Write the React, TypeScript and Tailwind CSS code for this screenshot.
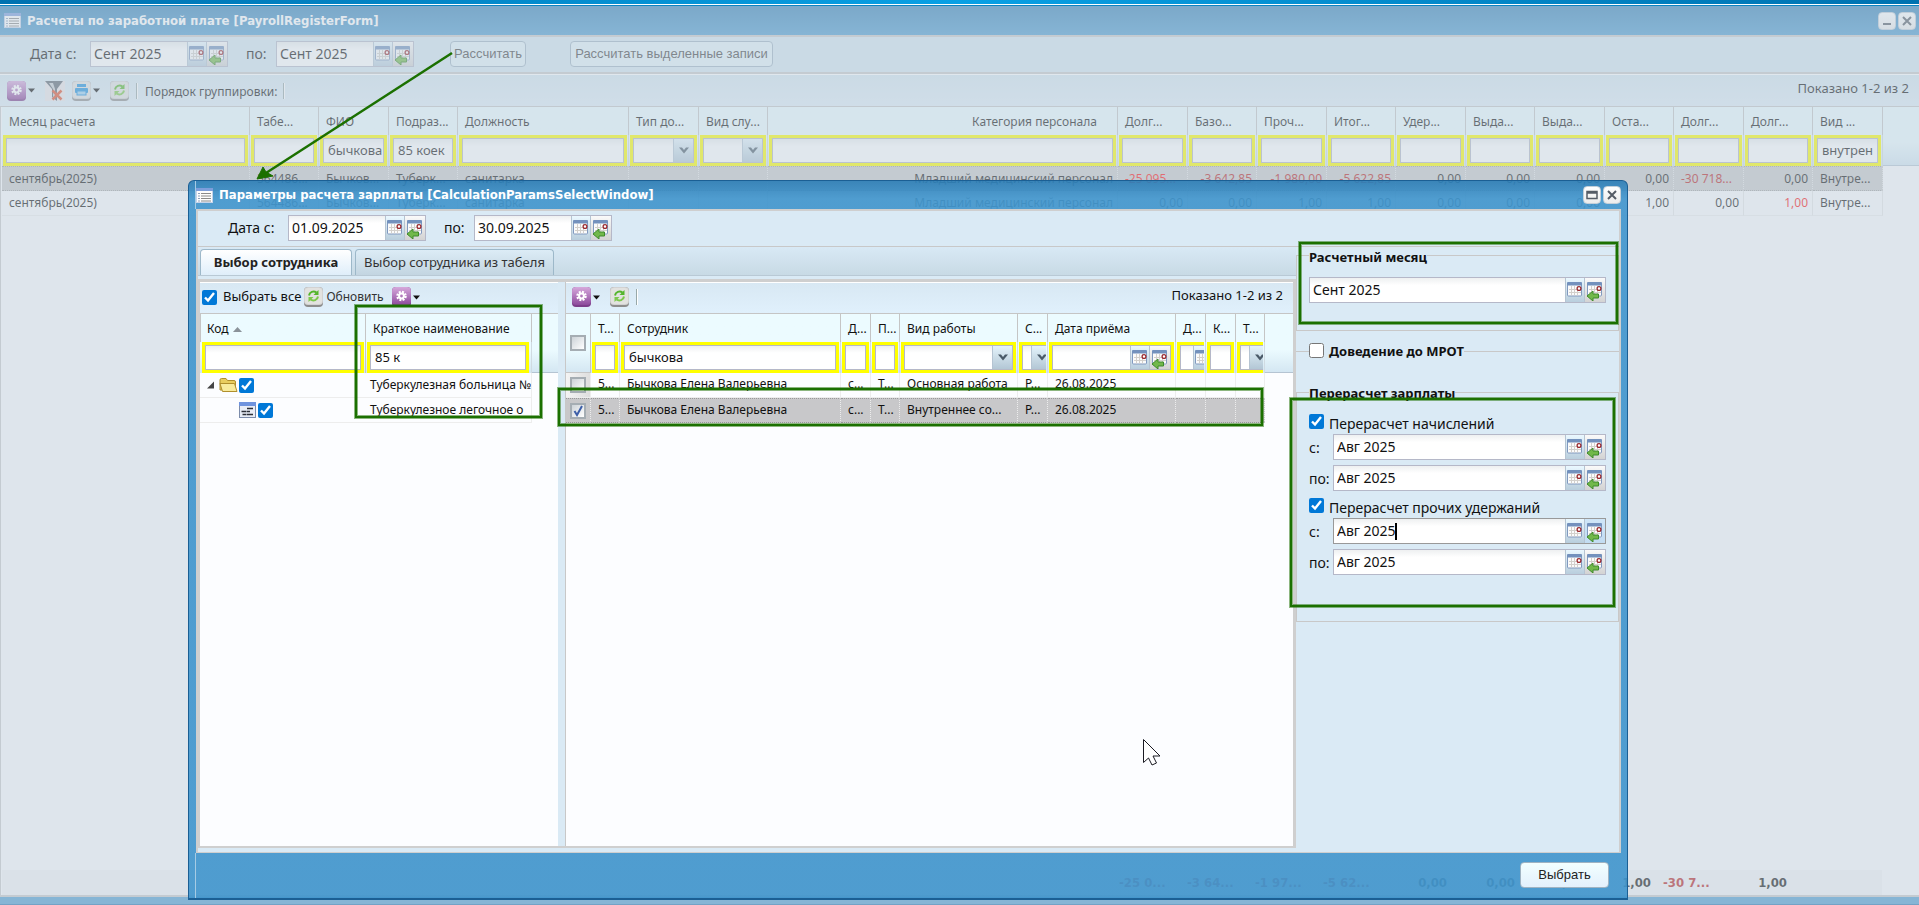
import { useState } from "react";
import type { ReactNode } from "react";
import clsx from "clsx";

type Align = "left" | "right";
type FilterKind = "text" | "select" | "date";

interface Column {
  title: string;
  width?: string;
  align?: Align;
  filter?: FilterKind;
  value?: string;
}

const W69 = "w-[69px]";
const W70 = "w-[70px]";

const registerColumns: Column[] = [
  { title: "Месяц расчета", width: "w-[248px]" },
  { title: "Табе...", width: W69 },
  { title: "ФИО", width: W70, value: "бычкова" },
  { title: "Подраз...", width: W69, value: "85 коек" },
  { title: "Должность", width: "w-[171px]" },
  { title: "Тип до...", width: W70, filter: "select" },
  { title: "Вид слу...", width: W69, filter: "select" },
  { title: "Категория персонала", align: "right" },
  { title: "Долг...", width: W70 },
  { title: "Базо...", width: W69 },
  { title: "Проч...", width: W70 },
  { title: "Итог...", width: W69 },
  { title: "Удер...", width: W70 },
  { title: "Выда...", width: W69 },
  { title: "Выда...", width: W70 },
  { title: "Оста...", width: W69 },
  { title: "Долг...", width: W70 },
  { title: "Долг...", width: W69 },
  { title: "Вид ...", width: W70, value: "внутрен" },
];

const registerRows: string[][] = [
  [
    "сентябрь(2025)", "564486...", "Бычков...", "Туберк...", "санитарка", "", "",
    "Младший медицинский персонал", "-25 095...", "-3 642,85", "-1 980,00", "-5 622,85",
    "0,00", "0,00", "0,00", "0,00", "-30 718...", "0,00", "Внутре...",
  ],
  [
    "сентябрь(2025)", "564486...", "Бычков...", "Туберк...", "санитарка", "", "",
    "Младший медицинский персонал", "0,00", "0,00", "1,00", "1,00",
    "0,00", "0,00", "0,00", "1,00", "0,00", "1,00", "Внутре...",
  ],
];

const summary = [
  "-25 0...", "-3 64...", "-1 97...", "-5 62...", "0,00", "0,00", "0,00", "1,00", "-30 7...", "1,00",
];

const employeeColumns: Column[] = [
  { title: "Т...", width: "w-[29px]" },
  { title: "Сотрудник", width: "w-[221px]", value: "бычкова" },
  { title: "Д...", width: "w-[30px]" },
  { title: "П...", width: "w-[29px]" },
  { title: "Вид работы", width: "w-[118px]", filter: "select" },
  { title: "С...", width: "w-[30px]", filter: "select" },
  { title: "Дата приёма", width: "w-[128px]", filter: "date" },
  { title: "Д...", width: "w-[30px]", filter: "date" },
  { title: "К...", width: "w-[30px]" },
  { title: "Т...", width: "w-[29px]", filter: "select" },
];

const employeeRows: string[][] = [
  ["5...", "Бычкова Елена Валерьевна", "с...", "Т...", "Основная работа", "Р...", "26.08.2025", "", "", ""],
  ["5...", "Бычкова Елена Валерьевна", "с...", "Т...", "Внутреннее со...", "Р...", "26.08.2025", "", "", ""],
];

/* ---------- icons ---------- */

function CalendarIcon({ arrow }: { arrow?: boolean }) {
  return (
    <svg width="18" height="22" viewBox="0 0 18 22" aria-hidden="true">
      <rect x="1.5" y="4" width="14" height="13" rx="1" fill="#fbfbfb" stroke="#8199bf" />
      <rect x="1" y="3" width="15" height="3.500" rx="1" fill="#7391bd" />
      <path d="M5.500 7v9.500M8.500 7v9.500M11.500 7v9.500M3 10.500h12M3 13.500h12" stroke="#d3d0cc" strokeWidth="1" />
      <circle cx="13" cy="9.500" r="1.900" fill="#fff" stroke="#9c2a30" strokeWidth="1.300" />
      {arrow && (
        <path d="M1 17l6-5v3h5.500v4H7v3z" fill="#72b84a" stroke="#3f8a2a" strokeWidth="1" strokeLinejoin="round" />
      )}
    </svg>
  );
}

function WindowIcon() {
  return (
    <svg width="17" height="15" viewBox="0 0 17 15" aria-hidden="true">
      <rect x="0.5" y="0.5" width="16" height="14" fill="#fdfdfd" stroke="#c5d3ea" />
      <rect x="0" y="0" width="17" height="3" fill="#7d9edb" />
      <path d="M2 5.500h2M2 8h2M2 10.500h2M2 13h2" stroke="#8fa2bd" />
      <path d="M5 5.500h10M5 8h10M5 10.500h10M5 13h10" stroke="#8a8a8a" />
    </svg>
  );
}

function GearIcon() {
  return (
    <svg width="19" height="20" viewBox="0 0 19 20" aria-hidden="true">
      <defs>
        <linearGradient id="gearFill" x1="0" y1="0" x2="0" y2="1">
          <stop offset="0" stopColor="#d6a9dc" />
          <stop offset="1" stopColor="#8d4a9c" />
        </linearGradient>
      </defs>
      <rect width="19" height="20" rx="4" fill="#7c3d8a" />
      <rect width="19" height="18" rx="4" fill="url(#gearFill)" />
      <circle cx="9.500" cy="9" r="4" fill="none" stroke="#fff" strokeWidth="2.500" strokeDasharray="1.900 1.240" />
      <circle cx="9.500" cy="9" r="2.400" fill="none" stroke="#fff" strokeWidth="2" />
    </svg>
  );
}

function RefreshIcon() {
  return (
    <svg width="19" height="20" viewBox="0 0 19 20" aria-hidden="true">
      <rect width="19" height="20" rx="4" fill="#8d8d8d" />
      <rect width="19" height="18" rx="4" fill="#d2d2d2" />
      <rect x="1" y="1" width="17" height="16" rx="3" fill="#e2e2e0" />
      <path d="M5 8.500C5.500 5 9.500 3.500 12.500 5.500" fill="none" stroke="#55b52c" strokeWidth="2" />
      <path d="M14.500 3v5h-5z" fill="#55b52c" />
      <path d="M14 9.500c-.5 3.500-4.500 5-7.500 3" fill="none" stroke="#7cc84c" strokeWidth="2" />
      <path d="M4.500 15v-5h5z" fill="#7cc84c" />
    </svg>
  );
}

function PrinterIcon() {
  return (
    <svg width="19" height="20" viewBox="0 0 19 20" aria-hidden="true">
      <rect width="19" height="20" rx="4" fill="#8d8d8d" />
      <rect width="19" height="18" rx="4" fill="#d2d2d2" />
      <rect x="1" y="1" width="17" height="16" rx="3" fill="#e2e2e0" />
      <rect x="5" y="3" width="9" height="3" fill="#1f8fdc" />
      <rect x="3" y="7" width="13" height="5" rx="1" fill="#1f8fdc" />
      <rect x="5" y="10" width="9" height="4" fill="#9bd0f2" stroke="#1f8fdc" />
    </svg>
  );
}

function ClearFilterIcon() {
  return (
    <svg width="20" height="20" viewBox="0 0 20 20" aria-hidden="true">
      <rect width="20" height="20" fill="#e9e5e8" />
      <path d="M0 0h18l-6 8v12l-5-4V8z" fill="#5d6670" />
      <path d="M4 2l4 6v8l2 2V8L8 2z" fill="#c9ced3" />
      <path d="M7.500 9.500l9 9M16.500 9.500l-9 9" stroke="#e0532f" strokeWidth="2.500" />
    </svg>
  );
}

function FolderIcon() {
  return (
    <svg width="19" height="16" viewBox="0 0 19 16" aria-hidden="true">
      <path d="M1 13V3q0-1.500 1.500-1.500H7L8.500 3.500H15q1.500 0 1.500 1.500v8z" fill="#e9cd5e" stroke="#b08f2c" />
      <path d="M3.500 14.500L1 6.500h14.500l2.500 8z" fill="#f8eb9c" stroke="#b08f2c" strokeLinejoin="round" />
    </svg>
  );
}

function LeafIcon() {
  return (
    <svg width="17" height="16" viewBox="0 0 17 16" aria-hidden="true">
      <rect x="0.5" y="0.5" width="16" height="15" fill="#e9edf6" stroke="#7c8cab" />
      <rect width="17" height="4" fill="#6f93de" />
      <path d="M2.500 9.500h5M8 6.500h6M8 9.500h3M3.500 12.500h4M8 12.500h6" stroke="#2c2f36" strokeWidth="1.500" />
    </svg>
  );
}

function Caret() {
  return (
    <svg width="7" height="5" viewBox="0 0 7 5" aria-hidden="true">
      <path d="M0 0.500h7L3.500 4.500z" fill="#111" />
    </svg>
  );
}

function Chevron() {
  return (
    <svg width="10" height="7" viewBox="0 0 10 7" aria-hidden="true">
      <path d="M0 0.500h3L5 3l2-2.500h3L5 6.500z" fill="#4a5a68" />
    </svg>
  );
}

/* ---------- controls ---------- */

function IconButton({ label, children }: { label: string; children: ReactNode }) {
  return (
    <button type="button" aria-label={label} className="flex shrink-0 items-center gap-[2px]">
      {children}
    </button>
  );
}

function DateTriggers({ active }: { active?: boolean }) {
  return (
    <>
      <button
        type="button"
        aria-label="Открыть календарь"
        className="flex w-5 shrink-0 items-center justify-center border-x border-[#b5c4d2] bg-linear-to-b from-[#eaf8ff] to-[#b9cedd]"
      >
        <CalendarIcon />
      </button>
      <button
        type="button"
        aria-label="Сбросить дату"
        className={clsx(
          "flex w-5 shrink-0 items-center justify-center bg-linear-to-b",
          active ? "from-[#cfe6f8] to-[#c2dcf2]" : "from-[#fafafa] to-[#d3d3d3]",
        )}
      >
        <CalendarIcon arrow />
      </button>
    </>
  );
}

interface DateFieldProps {
  label: string;
  value: string;
  width?: string;
  active?: boolean;
  hideLabel?: boolean;
}

function DateField({ label, value, width = "w-[138px]", active, hideLabel }: DateFieldProps) {
  const [text, setText] = useState(value);

  return (
    <div
      className={clsx(
        "relative flex h-[26px] border bg-white",
        active ? "border-[#999]" : "border-[#b5b8c8]",
        width,
      )}
    >
      <input
        aria-label={hideLabel ? label : undefined}
        id={hideLabel ? undefined : label}
        value={text}
        onChange={(e) => setText(e.target.value)}
        className="w-full min-w-0 bg-linear-to-b from-[#eef0f1] to-white to-30% pb-px pl-[3px] text-[14px] outline-none"
      />
      {/* text caret of the focused field */}
      {active && <span className="absolute top-1 left-[61px] h-[17px] w-[2px] bg-black" />}
      <DateTriggers active={active} />
    </div>
  );
}

/** Filter box under a column title */
function FilterBox({ column, index }: { column: Column; index: number }) {
  const kind = column.filter ?? "text";
  const label = `Фильтр: ${column.title} ${index}`;

  return (
    <div className="mx-px overflow-hidden">
      <div
        className={clsx(
          "flex h-[31px] border-[3px] border-[#ffff00]",
          kind === "select" && "min-w-[36px]",
          kind === "date" && "min-w-[60px]",
        )}
      >
        <div className="flex min-w-0 flex-1 border border-[#b5b8c8] bg-linear-to-b from-[#eef0f1] to-white to-30%">
          {kind === "select" ? (
            <>
              <select aria-label={label} className="w-full min-w-0 appearance-none outline-none" />
              <span className="flex w-5 shrink-0 items-center justify-center border-l border-[#b5c4d2] bg-linear-to-b from-[#e4f3fb] to-[#b3c7d5]">
                <Chevron />
              </span>
            </>
          ) : (
            <input
              aria-label={label}
              defaultValue={column.value}
              className="w-full min-w-0 pl-1 text-[13px] outline-none"
            />
          )}
          {kind === "date" && <DateTriggers />}
        </div>
      </div>
    </div>
  );
}

function BlueCheck({ label, checked = true }: { label?: string; checked?: boolean }) {
  return (
    <input
      type="checkbox"
      aria-label={label}
      defaultChecked={checked}
      className="size-[15px] shrink-0 accent-[#0078d7]"
    />
  );
}

function GrayCheck({ label, checked }: { label: string; checked?: boolean }) {
  return (
    <label className="relative flex size-4">
      <input
        type="checkbox"
        aria-label={label}
        defaultChecked={checked}
        className="size-4 appearance-none border-2 border-[#a5adb3] bg-linear-to-br from-[#cdd3d8] to-white"
      />
      {checked && (
        <svg width="16" height="16" viewBox="0 0 16 16" className="absolute inset-0">
          <path d="M4.500 8l2.500 4 5-9" fill="none" stroke="#3d5fa8" strokeWidth="2" />
        </svg>
      )}
    </label>
  );
}

function TextButton({ children, className }: { children: ReactNode; className?: string }) {
  return (
    <button
      type="button"
      className={clsx(
        "h-[26px] rounded border border-[#9fb3c2] font-['Liberation_Sans',sans-serif] text-[13px] whitespace-nowrap",
        className,
      )}
    >
      {children}
    </button>
  );
}

function ToolButton({ label, children }: { label: string; children: ReactNode }) {
  return (
    <button
      type="button"
      aria-label={label}
      className="flex size-[18px] items-center justify-center rounded border border-[#c3cfd9] bg-linear-to-b from-white to-[#ececec]"
    >
      <svg width="12" height="12" viewBox="0 0 12 12" fill="none" stroke="#555c66" strokeWidth="2">
        {children}
      </svg>
    </button>
  );
}

function Separator() {
  return <span className="h-4 w-[2px] border-r border-white bg-[#98a8a8]" />;
}

function ColumnTitle({ column }: { column: Column }) {
  return (
    <th
      scope="col"
      className={clsx(
        "h-[28px] overflow-hidden border-r border-[#c5c5c5] pt-[2px] pl-[7px] font-normal whitespace-nowrap",
        column.align === "right" ? "pr-5 text-right" : "text-left",
      )}
    >
      {column.title}
    </th>
  );
}

/* ---------- register window ---------- */

function RegisterGrid() {
  return (
    <table className="w-full table-fixed border-separate border-spacing-0 text-[12px]">
      <colgroup>
        {registerColumns.map((column, i) => (
          <col key={i} className={column.width} />
        ))}
        <col className="w-[36px]" />
      </colgroup>
      <thead className="bg-linear-to-b from-[#ecfbff] from-60% to-[#d3e6f2]">
        <tr>
          {registerColumns.map((column, i) => (
            <ColumnTitle key={i} column={column} />
          ))}
          <td />
        </tr>
        <tr>
          {registerColumns.map((column, i) => (
            <td key={i} className="border-r border-[#d0dbe2] p-0">
              <FilterBox column={column} index={i} />
            </td>
          ))}
          <td className="border-b border-[#b5c4d2]" />
        </tr>
      </thead>
      <tbody>
        {registerRows.map((row, r) => (
          <tr key={r}>
            {row.map((cell, c) => {
              const numeric = /\d,\d\d$/.test(cell);
              const red = cell.startsWith("-") || (r === 1 && c === 17);
              return (
                <td
                  key={c}
                  className={clsx(
                    "h-[25px] overflow-hidden border-r border-r-[#e6e6e6] px-[7px] whitespace-nowrap",
                    r === 0 && "border-y border-dotted border-y-[#a0a0a0] bg-[#c8c8c8]",
                    r === 1 && "border-b border-b-[#ededed]",
                    (numeric || c === 7) && "pr-1 text-right",
                    red && (c === 8 || r === 1 ? "text-[#ff1010]" : "text-[#b82020]"),
                  )}
                >
                  {cell}
                </td>
              );
            })}
            <td />
          </tr>
        ))}
      </tbody>
    </table>
  );
}

function RegisterWindow() {
  return (
    <section className="flex min-h-0 flex-1 flex-col bg-[#4f9dd0]">
      <header className="flex h-[29px] items-center bg-linear-to-b from-[#3a84b8] to-[#4f9dd0] pr-[3px] pl-1">
        <WindowIcon />
        <h1 className="ml-[6px] flex-1 font-['DejaVu_Sans_Condensed','Noto_Sans',sans-serif] text-[13px] font-bold text-white">
          Расчеты по заработной плате [PayrollRegisterForm]
        </h1>
        <div className="flex gap-[2px]">
          <ToolButton label="Свернуть">
            <path d="M2 9h8" />
          </ToolButton>
          <ToolButton label="Закрыть">
            <path d="M2 2l8 8M10 2l-8 8" />
          </ToolButton>
        </div>
      </header>

      <div className="flex h-[39px] items-center border-y-2 border-[#c8c8c8] bg-[#d5e6ef] pb-[2px] pl-[30px]">
        <label htmlFor="Месяц с" className="w-[60px] text-[14px]">Дата с:</label>
        <DateField label="Месяц с" value="Сент 2025" />
        <label htmlFor="Месяц по" className="ml-[18px] w-[30px] text-[14px]">по:</label>
        <DateField label="Месяц по" value="Сент 2025" />
        <TextButton className="ml-9 w-[76px] bg-[#e2f2f8] text-[#444]">Рассчитать</TextButton>
        <TextButton className="ml-11 w-[203px] bg-[#e2f2f8] text-[#444]">Рассчитать выделенные записи</TextButton>
      </div>

      <div className="flex h-[33px] items-center border-t border-b border-t-white border-b-[#c5c5c5] bg-linear-to-b from-[#d5e6ef] to-[#dfecf6] pr-[10px] pl-[7px]">
        <IconButton label="Настройки"><GearIcon /><Caret /></IconButton>
        <span className="ml-[10px] flex"><IconButton label="Сбросить фильтры"><ClearFilterIcon /></IconButton></span>
        <span className="ml-[7px] flex"><IconButton label="Печать"><PrinterIcon /><Caret /></IconButton></span>
        <span className="mr-[7px] ml-[10px] flex"><IconButton label="Обновить"><RefreshIcon /></IconButton></span>
        <Separator />
        <span className="mr-[6px] ml-[7px] pt-[2px] text-[12px]">Порядок группировки:</span>
        <Separator />
        <span className="ml-auto pb-1 text-[13px]">Показано 1-2 из 2</span>
      </div>

      <div className="flex min-h-0 flex-1 flex-col border-b-2 border-l border-[#c8c8c8] bg-[#fbfcfe] pl-px">
        <RegisterGrid />
        <div className="mt-auto mr-[37px] flex h-[25px] items-center justify-end bg-[#f3f4f5] pr-[90px] font-['DejaVu_Sans_Condensed','Noto_Sans',sans-serif] text-[13px] font-bold">
          {summary.map((cell, i) => (
            <span
              key={i}
              className={clsx(
                "w-[68px] pr-[5px] pl-[7px] whitespace-nowrap",
                cell.startsWith("-") ? "text-left text-[#b82020]" : "text-right",
              )}
            >
              {cell}
            </span>
          ))}
        </div>
      </div>
      <div className="h-2 border-b border-[#2a78b0]" />
    </section>
  );
}

/* ---------- dialog ---------- */

function DepartmentTree() {
  return (
    <section className="flex w-[358px] shrink-0 flex-col bg-[#fcfdff]">
      <div className="flex h-[32px] items-center border-t border-b border-t-white border-b-[#c5c5c5] bg-linear-to-b from-[#d8e8f3] to-[#e0f0fc] pb-[2px] pl-[2px]">
        <label className="flex items-center gap-[6px] text-[13px]">
          <BlueCheck />
          Выбрать все
        </label>
        <button type="button" className="ml-[3px] flex items-center gap-[3px] text-[12px] text-[#333]">
          <RefreshIcon />
          Обновить
        </button>
        <span className="ml-2 flex"><IconButton label="Настройки"><GearIcon /><Caret /></IconButton></span>
      </div>
      <table className="w-full table-fixed border-separate border-spacing-0 text-[12px]">
        <colgroup>
          <col className="w-[166px]" />
          <col className="w-[166px]" />
          <col />
        </colgroup>
        <thead className="bg-linear-to-b from-[#ecfbff] from-60% to-[#d3e6f2]">
          <tr>
            <th scope="col" className="h-[28px] border-r border-l border-[#c5c5c5] pt-[2px] pl-[6px] text-left font-normal">
              <span className="flex items-center gap-1">
                Код
                <svg width="9" height="5" viewBox="0 0 9 5" aria-hidden="true">
                  <path d="M4.500 0L9 5H0z" fill="#8a9299" />
                </svg>
              </span>
            </th>
            <th scope="col" className="border-r border-[#c5c5c5] pt-[2px] pl-[7px] text-left font-normal">
              Краткое наименование
            </th>
            <td />
          </tr>
          <tr>
            <td className="border-r border-[#c5c5c5] p-0 pl-px">
              <FilterBox column={{ title: "Код" }} index={0} />
            </td>
            <td className="border-r border-[#d0dbe2] p-0 pr-px">
              <FilterBox column={{ title: "Краткое наименование", value: "85 к" }} index={1} />
            </td>
            <td className="border-b border-[#b5c4d2]" />
          </tr>
        </thead>
        <tbody>
          <tr>
            <td className="h-[25px] border-b border-[#ededed]">
              <span className="flex items-center gap-px pl-[7px]">
                <svg width="11" height="8" viewBox="0 0 11 8" aria-hidden="true">
                  <path d="M7 0.500V7.500H0z" fill="#444" />
                </svg>
                <FolderIcon />
                <BlueCheck label="Туберкулезная больница" />
              </span>
            </td>
            <td className="overflow-hidden border-r border-b border-[#ededed] pl-1 whitespace-nowrap">
              Туберкулезная больница №
            </td>
            <td />
          </tr>
          <tr>
            <td className="h-[25px] border-b border-[#ededed]">
              <span className="flex items-center gap-[2px] pl-[39px]">
                <LeafIcon />
                <BlueCheck label="Туберкулезное легочное отделение" />
              </span>
            </td>
            <td className="overflow-hidden border-r border-b border-[#ededed] pl-1 whitespace-nowrap">
              Туберкулезное легочное о
            </td>
            <td />
          </tr>
        </tbody>
      </table>
    </section>
  );
}

function EmployeeGrid() {
  return (
    <section className="flex min-w-0 flex-1 flex-col border-l border-[#c8c8c8] bg-[#fcfdff]">
      <div className="flex h-[32px] items-center border-t border-b border-t-white border-b-[#c5c5c5] bg-linear-to-b from-[#d8e8f3] to-[#e0f0fc] pr-[10px] pb-[2px] pl-[6px]">
        <IconButton label="Настройки"><GearIcon /><Caret /></IconButton>
        <span className="mr-[7px] ml-[10px] flex"><IconButton label="Обновить"><RefreshIcon /></IconButton></span>
        <Separator />
        <span className="ml-auto pb-[2px] text-[13px]">Показано 1-2 из 2</span>
      </div>
      <table className="w-full table-fixed border-separate border-spacing-0 text-[12px]">
        <colgroup>
          <col className="w-[25px]" />
          {employeeColumns.map((column, i) => (
            <col key={i} className={column.width} />
          ))}
          <col />
        </colgroup>
        <thead className="bg-linear-to-b from-[#ecfbff] from-60% to-[#d3e6f2]">
          <tr>
            <td rowSpan={2} className="border-r border-b border-[#c5c5c5] pl-1">
              <GrayCheck label="Выделить все строки" />
            </td>
            {employeeColumns.map((column, i) => (
              <ColumnTitle key={i} column={column} />
            ))}
            <td />
          </tr>
          <tr>
            {employeeColumns.map((column, i) => (
              <td key={i} className="border-r border-[#d0dbe2] p-0">
                <FilterBox column={column} index={i} />
              </td>
            ))}
            <td className="border-b border-[#b5c4d2]" />
          </tr>
        </thead>
        <tbody>
          {employeeRows.map((row, r) => {
            const cellClass = clsx(
              "h-[25px] border-r border-r-[#ededed] whitespace-nowrap",
              r === 0 ? "border-b border-b-[#ededed]" : "border-y border-dotted border-y-[#999] bg-[#c8c8ca]",
            );
            return (
              <tr key={r}>
                <td className={clsx(cellClass, "pl-1", r === 0 && "bg-linear-to-r from-[#f4f4f4] to-[#dedede]")}>
                  <GrayCheck label={`Строка ${r + 1}`} checked={r === 1} />
                </td>
                {row.map((cell, c) => (
                  <td key={c} className={clsx(cellClass, "overflow-hidden pb-[2px] pl-[7px]")}>
                    {cell}
                  </td>
                ))}
                <td />
              </tr>
            );
          })}
        </tbody>
      </table>
    </section>
  );
}

interface PeriodGroupProps {
  title: string;
  activeFrom?: boolean;
}

function PeriodGroup({ title, activeFrom }: PeriodGroupProps) {
  return (
    <div>
      <label className="flex h-[25px] gap-[5px] pt-[5px] text-[14px] leading-[20px]">
        <BlueCheck />
        {title}
      </label>
      <div className="grid grid-cols-[24px_1fr] items-center gap-y-[5px] text-[14px]">
        <span>с:</span>
        <DateField label={`${title} с`} value="Авг 2025" width="w-full" active={activeFrom} hideLabel />
        <span>по:</span>
        <DateField label={`${title} по`} value="Авг 2025" width="w-full" hideLabel />
      </div>
    </div>
  );
}

function ParamsPanel() {
  return (
    <aside className="w-[323px] shrink-0 text-[13px]">
      <fieldset className="border border-[#c8c8c8] pt-[14px] pr-3 pb-[27px] pl-3">
        <legend className="h-4 leading-[20px] font-bold">Расчетный месяц</legend>
        <DateField label="Расчетный месяц" value="Сент 2025" width="w-full" hideLabel />
      </fieldset>
      <fieldset className="mt-3 h-[41px] border-t border-[#c8c8c8] pl-[13px]">
        <legend className="h-4 leading-[16px] font-bold">
          <label className="flex gap-[5px]">
            <BlueCheck checked={false} />
            Доведение до МРОТ
          </label>
        </legend>
      </fieldset>
      <fieldset className="flex flex-col gap-[2px] border border-[#c8c8c8] pt-[9px] pr-3 pb-[46px] pl-3">
        <legend className="h-4 leading-[18px] font-bold">Перерасчет зарплаты</legend>
        <PeriodGroup title="Перерасчет начислений" />
        <PeriodGroup title="Перерасчет прочих удержаний" activeFrom />
      </fieldset>
    </aside>
  );
}

function ParamsDialog() {
  return (
    <section
      role="dialog"
      aria-label="Параметры расчета зарплаты"
      className="absolute top-[180px] right-[291px] bottom-[5px] left-[188px] flex flex-col rounded-t-md border border-b-2 border-[#1b5f94] bg-linear-to-b from-[#277bb5]/88 to-[#3c93cc]/88 to-[18px] pr-[6px] pl-[6px]"
    >
      <header className="flex h-[28px] shrink-0 items-center border-l border-[#a5cbe4]">
        <WindowIcon />
        <h2 className="ml-[6px] flex-1 font-['DejaVu_Sans_Condensed','Noto_Sans',sans-serif] text-[13px] font-bold text-white">
          Параметры расчета зарплаты [CalculationParamsSelectWindow]
        </h2>
        <div className="flex gap-[2px]">
          <ToolButton label="Развернуть">
            <path d="M1 2.500h10v7H1zM1 4h10" strokeWidth="1.500" />
          </ToolButton>
          <ToolButton label="Закрыть">
            <path d="M2 2l8 8M10 2l-8 8" />
          </ToolButton>
        </div>
      </header>

      <div className="ml-px flex min-h-0 flex-1 flex-col border-2 border-b border-[#cfcfcf] bg-[#daeaf5]">
        <div className="flex h-[36px] shrink-0 items-center border-b border-[#c8c8c8] pb-[2px] pl-[30px]">
          <label htmlFor="Дата с" className="w-[60px] text-[14px]">Дата с:</label>
          <DateField label="Дата с" value="01.09.2025" />
          <label htmlFor="Дата по" className="ml-[18px] w-[30px] text-[14px]">по:</label>
          <DateField label="Дата по" value="30.09.2025" />
        </div>

        <div className="flex min-h-0 flex-1">
          <div className="flex min-w-0 flex-1 flex-col">
            <div className="h-[32px] shrink-0">
              <div role="tablist" className="flex h-[29px] items-end gap-[3px] border-b border-[#b9c9d5] bg-linear-to-b from-[#d8e9f5] to-[#c8dae5] px-[2px]">
                <button
                  type="button"
                  role="tab"
                  aria-selected="true"
                  className="h-[26px] w-[152px] rounded-t border border-b-0 border-[#9db8c9] bg-linear-to-b from-white to-[#dfeefa] text-[13px] font-bold text-[#222]"
                >
                  Выбор сотрудника
                </button>
                <button
                  type="button"
                  role="tab"
                  aria-selected="false"
                  className="h-[26px] w-[199px] rounded-t border border-b-0 border-[#9db8c9] bg-linear-to-b from-[#dcecf6] to-[#c3d5e1] text-[13px] text-[#333]"
                >
                  Выбор сотрудника из табеля
                </button>
              </div>
            </div>
            <div className="flex min-h-0 flex-1 gap-[7px] border-t-3 border-r-3 border-b-2 border-l-2 border-[#cfcfcf]">
              <DepartmentTree />
              <EmployeeGrid />
            </div>
            <div className="h-1" />
          </div>
          <ParamsPanel />
        </div>
      </div>

      <footer className="flex h-[45px] shrink-0 justify-end border-l border-[#a5cbe4] pt-[9px] pr-3">
        <TextButton className="w-[89px] bg-linear-to-b from-[#f2ffff] to-[#e3f0fc] text-[#222]">Выбрать</TextButton>
      </footer>
    </section>
  );
}

/* ---------- screen marks ---------- */

const markClass =
  "pointer-events-none absolute border-2 border-[#1b7000] shadow-[0_0_0_1px_#1b700080,inset_0_0_0_1px_#1b700080]";

function Marks() {
  return (
    <>
      <svg className="pointer-events-none absolute top-0 left-0" width="480" height="200" aria-hidden="true">
        <path d="M452 53L266 173" stroke="#1b7000" strokeWidth="2.500" />
        <path d="M257 179l6-12 3 5 7 4z" fill="#1b7000" stroke="#1b7000" strokeLinejoin="round" />
      </svg>
      <div className={clsx(markClass, "top-[305px] left-[355px] h-[113px] w-[187px]")} />
      <div className={clsx(markClass, "top-[388px] left-[558px] h-[38px] w-[705px]")} />
      <div className={clsx(markClass, "top-[242px] right-[301px] h-[82px] w-[319px]")} />
      <div className={clsx(markClass, "top-[398px] right-[304px] h-[209px] w-[325px]")} />
      <svg className="pointer-events-none absolute top-[738px] left-[1142px]" width="20" height="30" viewBox="0 0 20 30" aria-hidden="true">
        <path d="M1.500 1.500v23l5-4.500 3.500 7 4.500-2-3.500-7h7z" fill="#fff" stroke="#1a1a22" />
      </svg>
    </>
  );
}

export default function App() {
  return (
    <main className="relative flex h-screen flex-col overflow-hidden font-['Noto_Sans',sans-serif] text-[#111]">
      <div className="h-[6px] shrink-0 border-b border-[#0c85c4] bg-linear-to-r from-[#0072b0] via-[#0aa0e4] to-[#0072b0]">
        <div className="mt-1 h-px bg-white" />
      </div>
      <RegisterWindow />
      {/* modal mask */}
      <div className="absolute inset-x-0 top-[6px] bottom-0 bg-[#c0cfda]/49" />
      <ParamsDialog />
      <Marks />
    </main>
  );
}
